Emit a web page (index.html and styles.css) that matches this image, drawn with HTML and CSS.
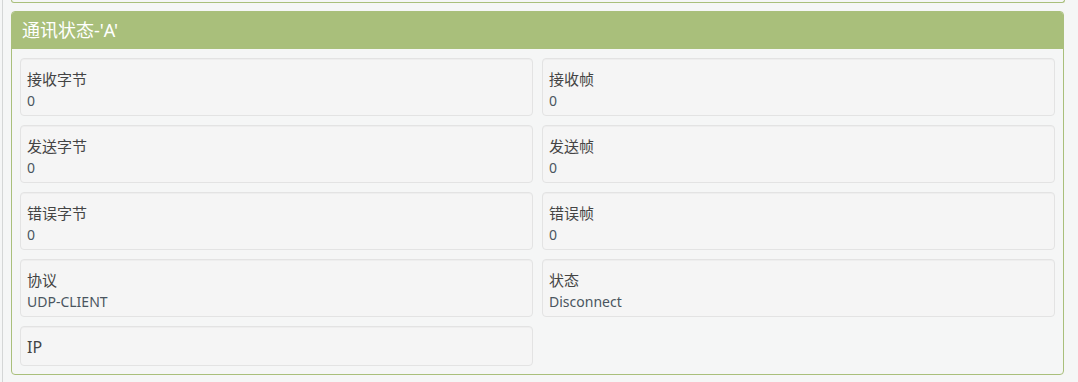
FILE: index.html
```html
<!DOCTYPE html>
<html>
  <head>
    <meta charset="UTF-8" />
    <title>通讯状态</title>
    <link rel="stylesheet" href="styles.css">
  </head>
  <body>
    <div class="page">
      <!-- tail of the panel above -->
      <div class="panel-prev"></div>

      <div class="panel">
        <div class="panel-heading">通讯状态-'A'</div>
        <div class="panel-body">
          <div class="stat">
            <div class="stat-label">接收字节</div>
            <div class="stat-value">0</div>
          </div>
          <div class="stat">
            <div class="stat-label">接收帧</div>
            <div class="stat-value">0</div>
          </div>
          <div class="stat">
            <div class="stat-label">发送字节</div>
            <div class="stat-value">0</div>
          </div>
          <div class="stat">
            <div class="stat-label">发送帧</div>
            <div class="stat-value">0</div>
          </div>
          <div class="stat">
            <div class="stat-label">错误字节</div>
            <div class="stat-value">0</div>
          </div>
          <div class="stat">
            <div class="stat-label">错误帧</div>
            <div class="stat-value">0</div>
          </div>
          <div class="stat">
            <div class="stat-label">协议</div>
            <div class="stat-value">UDP-CLIENT</div>
          </div>
          <div class="stat">
            <div class="stat-label">状态</div>
            <div class="stat-value">Disconnect</div>
          </div>
          <div class="stat">
            <div class="stat-label stat-label-big">IP</div>
          </div>
        </div>
      </div>
    </div>
  </body>
</html>
```

FILE: styles.css
```css
body {
  font-family: "Noto Sans", "Noto Sans CJK SC", sans-serif;
  margin: 0;
  padding: 0;
  background-color: #f5f6f6;
  color: #444;
}

.page {
  margin-left: 2px;
  border-left: 1px solid #d4d6d6;
  padding: 0 14px 8px 8px;
  min-height: 382px;
  box-sizing: border-box;
}

.panel-prev {
  height: 2px;
  border: 1px solid #a9bf7b;
  border-top: none;
  border-radius: 0 0 4px 4px;
  margin-right: -1px;
}

.panel {
  margin-top: 8px;
  border: 1px solid #a9bf7b;
  border-radius: 4px;
  background-color: #f5f6f6;
}

.panel-heading {
  background-color: #a9bf7b;
  color: #fff;
  font-size: 18px;
  line-height: 37px;
  padding: 0 10px;
  border-radius: 3px 3px 0 0;
}

.panel-body {
  display: grid;
  grid-template-columns: 1fr 1fr;
  gap: 9px;
  padding: 9px 8px 8px 8px;
}

.stat {
  background-color: #f5f5f5;
  border: 1px solid #e3e3e3;
  border-radius: 4px;
  box-shadow: inset 0 1px 1px rgba(0, 0, 0, 0.03);
  padding: 8px 6px 5px;
}

.stat-label {
  font-size: 15px;
  line-height: 25px;
  color: #444;
}

.stat-label-big {
  font-size: 16px;
  line-height: 25px;
}

.stat-value {
  font-size: 14px;
  line-height: 18px;
  color: #4a5560;
}
```
